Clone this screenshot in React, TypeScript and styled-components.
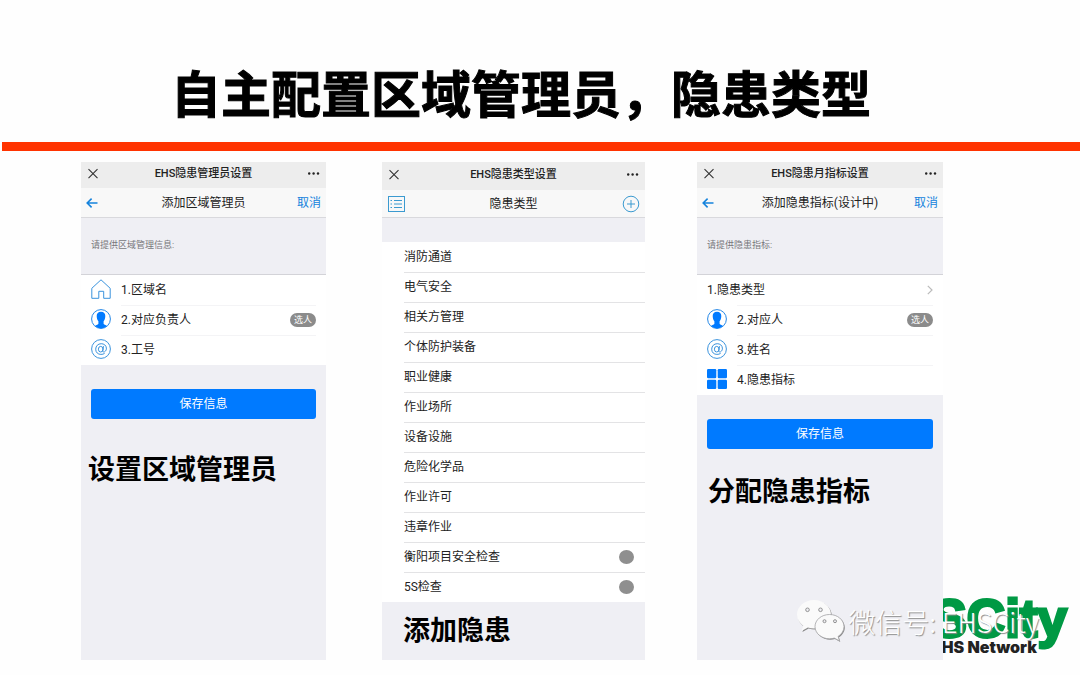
import React, { useId } from "react";
import styled, { createGlobalStyle } from "styled-components";

const GlobalStyle = createGlobalStyle`
  *, *::before, *::after { box-sizing: border-box; }
  body {
    margin: 0;
    background: #fefefe;
    color: #222;
    font-family: Roboto, "Noto Sans CJK SC", sans-serif;
    font-size: 12px;
  }
  button, input { font: inherit; color: inherit; margin: 0; padding: 0; border: 0; background: none; }
  h1, h2, h3, p, ul { margin: 0; padding: 0; font-weight: inherit; font-size: inherit; }
  ul { list-style: none; }
  a { text-decoration: none; }
  svg { display: block; flex: none; }
`;

const Slide = styled.main`
  position: relative;
  min-height: 675px;
  overflow: hidden;
`;

const SlideTitle = styled.h1`
  padding: 56px 38px 0 0;
  line-height: 70px;
  font-family: "Noto Sans CJK SC", sans-serif;
  font-size: 50px;
  font-weight: 700;
  text-align: center;
  color: #000;
  -webkit-text-stroke: 1px #000;
`;

const Rule = styled.div`
  height: 9px;
  margin: 16px 0 11px 2px;
  background: #ff3300;
`;

const Board = styled.div`
  position: relative;
  z-index: 1;
  display: grid;
  grid-template-columns: 81fr 245fr 56fr 263fr 52fr 246fr 137fr;
  min-height: 498px;
`;

const Phone = styled.section<{ $track: number }>`
  grid-column: ${(p) => p.$track};
  min-width: 0;
  background: #efeff4;
`;

const TitleBar = styled.header<{ $tall?: boolean }>`
  display: grid;
  grid-template-columns: 24px 1fr 24px;
  align-items: center;
  height: ${(p) => (p.$tall ? 28 : 26)}px;
  padding: 0 5px 2px;
  background: #ededed;
  line-height: 22px;
  font-size: 11px;
  font-weight: 500;
  text-align: center;
`;

const NavBar = styled.nav<{ $tall?: boolean }>`
  display: grid;
  grid-template-columns: 30px 1fr 30px;
  align-items: center;
  height: ${(p) => (p.$tall ? 28 : 30)}px;
  padding: 0 5px;
  border-bottom: 1px solid #d9d9dd;
  background: #f8f8f8;
  line-height: 24px;
  text-align: center;
`;

const IconButton = styled.button<{ $end?: boolean }>`
  display: flex;
  justify-content: ${(p) => (p.$end ? "flex-end" : "flex-start")};
  cursor: pointer;
`;

const Cancel = styled.a`
  color: #1583dc;
  text-align: right;
`;

const Hint = styled.p`
  height: 56px;
  padding: 0 10px;
  line-height: 54px;
  font-size: 9px;
  color: #77777b;
`;

const Fields = styled.div`
  border-top: 1px solid #d3d3d8;
  background: #fff;
`;

const Field = styled.div`
  display: flex;
  align-items: center;
  gap: 10px;
  height: 30px;
  padding: 0 10px 2px;
`;

const FieldBody = styled.div<{ $line?: boolean }>`
  display: flex;
  flex: 1;
  align-items: center;
  min-width: 0;
  height: 28px;
  border-top: 1px solid ${(p) => (p.$line ? "#f4f4f6" : "transparent")};
  line-height: 26px;
`;

const FieldInput = styled.input`
  flex: 1;
  min-width: 0;
  height: 26px;
  padding-left: 8px;
  outline: 0;
`;

const Pill = styled.button`
  height: 14px;
  padding: 0 4px;
  border-radius: 7px;
  background: #8b8b8b;
  color: #fff;
  line-height: 14px;
  font-size: 9px;
`;

const Save = styled.button`
  display: block;
  width: calc(100% - 20px);
  height: 30px;
  margin: 24px 10px 0;
  border-radius: 3px;
  background: #007aff;
  color: #fff;
  line-height: 28px;
`;

const Caption = styled.h2<{ $top: number; $left: number }>`
  padding: ${(p) => p.$top}px 0 0 ${(p) => p.$left}px;
  font-family: "Noto Sans CJK SC", sans-serif;
  line-height: 40px;
  font-size: 27px;
  font-weight: 700;
  color: #000;
`;

const TypeList = styled.ul`
  margin-top: 24px;
  padding-left: 22px;
  background: #fff;
`;

const TypeItem = styled.li`
  display: flex;
  align-items: center;
  justify-content: space-between;
  height: 30px;
  padding: 0 11px 1px 0;
  line-height: 28px;
  & + & { border-top: 1px solid #e3e3e5; }
`;

const Dot = styled.span`
  width: 15px;
  height: 14px;
  border-radius: 50%;
  background: #8f8f8f;
`;

const Logo = styled.div`
  position: absolute;
  right: 13px;
  top: 590px;
  text-align: right;
`;

const LogoName = styled.div`
  line-height: 58px;
  font-family: "Liberation Sans", sans-serif;
  font-size: 53px;
  font-weight: 700;
  color: #009944;
  -webkit-text-stroke: 3px #009944;
`;

const LogoSub = styled.div`
  margin-top: -10px;
  padding-right: 30px;
  line-height: 18px;
  font-family: Inter, sans-serif;
  font-size: 16px;
  font-weight: 900;
  color: #222;
`;

const Watermark = styled.div`
  position: absolute;
  z-index: 2;
  right: 41px;
  top: 599px;
  display: flex;
  gap: 2px;
  color: #fff;
  font-family: "Noto Sans CJK SC", sans-serif;
  line-height: 46px;
  font-size: 27px;
  font-weight: 300;
  text-shadow: 1px 1px 1px #8c8c8c;
  white-space: pre;
`;

const CloseIcon = () => (
  <svg width="14" height="14" viewBox="0 0 14 14" fill="none" stroke="#333" strokeWidth="1.1">
    <path d="M2.5 2.200l9 9M11.5 2.200l-9 9" />
  </svg>
);

const MoreIcon = () => (
  <svg width="14" height="14" viewBox="0 0 14 14" fill="#222">
    <circle cx="2.2" cy="6.500" r="1.2" />
    <circle cx="6.6" cy="6.500" r="1.2" />
    <circle cx="11" cy="6.500" r="1.2" />
  </svg>
);

const BackIcon = () => (
  <svg width="12" height="12" viewBox="0 0 12 12" fill="none" stroke="#1583dc" strokeWidth="1.6">
    <path d="M11.5 6H1.2M5.6 1.6L1.2 6l4.4 4.4" />
  </svg>
);

const ListIcon = () => (
  <svg width="18" height="16" viewBox="0 0 18 16" fill="none" stroke="#3b9ad0">
    <rect x="1.5" y="0.5" width="16" height="15" />
    <path d="M7 4.5h8M7 8h8M7 11.5h8M3.5 4.500h1.500M3.500 8h1.500M3.500 11.500h1.500" />
  </svg>
);

const AddIcon = () => (
  <svg width="18" height="18" viewBox="0 0 18 18" fill="none" stroke="#3b9ad0">
    <circle cx="9" cy="9" r="7.8" />
    <path d="M9 5v8M5 9h8" />
  </svg>
);

const HomeIcon = () => (
  <svg width="20" height="20" viewBox="0 0 20 20" fill="none" stroke="#3a93dd">
    <path d="M0.8 9.3L10 0.8l9.2 8.5v10h-6.500v-7H7.800v7h-7z" />
  </svg>
);

const PersonIcon = () => (
  <svg width="20" height="20" viewBox="0 0 20 20">
    <circle cx="10" cy="10" r="9.4" fill="#fff" stroke="#2487e6" />
    <path
      fill="#007aff"
      d="M10 2.700c-2.900 0-4.300 1.700-4.300 4.400 0 2.200.6 3.900 1.700 5.200v2.400c0 1-2.200 1.200-3.400 2.200A9.400 9.400 0 0 0 10 19.400a9.400 9.400 0 0 0 6-2.500c-1.200-1-3.400-1.200-3.400-2.200v-2.400c1.100-1.300 1.700-3 1.700-5.200 0-2.700-1.400-4.400-4.300-4.400z"
    />
  </svg>
);

const AtIcon = () => (
  <svg width="20" height="20" viewBox="0 0 20 20" fill="none" stroke="#3a93dd">
    <circle cx="10" cy="10" r="9.4" />
    <ellipse cx="9.700" cy="10.200" rx="2.300" ry="2.800" />
    <path d="M12.500 7.200l-.7 4.300c-.2 1.500.8 1.900 1.800 1.300 1.300-.8 1.900-2.200 1.800-3.700C15.200 6.400 13 4.700 10.200 4.700 7 4.700 4.700 7 4.700 10.200s2.200 5.200 5.200 5.200c1.500 0 2.700-.3 3.700-1" />
  </svg>
);

const GridIcon = () => (
  <svg width="20" height="20" viewBox="0 0 20 20" fill="#007aff">
    <rect width="9.300" height="9.300" rx="1.200" />
    <rect x="10.700" width="9.300" height="9.300" rx="1.200" />
    <rect y="10.700" width="9.300" height="9.300" rx="1.200" />
    <rect x="10.700" y="10.700" width="9.300" height="9.300" rx="1.200" />
  </svg>
);

const ChevronIcon = () => (
  <svg width="6" height="10" viewBox="0 0 6 10" fill="none" stroke="#bbb" strokeWidth="1.200">
    <path d="M0.800 0.800L5 5 0.800 9.200" />
  </svg>
);

const WeChatIcon = () => (
  <svg width="50" height="46" viewBox="0 0 50 46">
    <g fill="#8c8c8c" transform="translate(0.800 1)">
      <path d="M18 1C8.500 1 1 7.500 1 15.600c0 4.500 2.400 8.400 6.200 11.100L5.600 32l6.300-3.400c2 .6 4 .9 6.100.9 9.500 0 17-6.200 17-13.900S27.500 1 18 1z" />
      <path d="M33.500 15.500c-8 0-14.500 5.400-14.500 12.100s6.500 12.200 14.500 12.200c1.700 0 3.300-.3 4.800-.7l5.200 2.800-1.400-4.500c3.600-2.200 5.900-5.800 5.900-9.800 0-6.700-6.500-12.100-14.500-12.100z" />
    </g>
    <path fill="#fafafa" d="M18 1C8.500 1 1 7.500 1 15.600c0 4.500 2.400 8.400 6.200 11.100L5.600 32l6.300-3.400c2 .6 4 .9 6.100.9 9.500 0 17-6.200 17-13.900S27.500 1 18 1z" />
    <path fill="#fafafa" stroke="#a2a2a4" strokeWidth="0.800" d="M33.500 15.500c-8 0-14.500 5.400-14.500 12.100s6.500 12.200 14.500 12.200c1.700 0 3.300-.3 4.800-.7l5.200 2.800-1.400-4.500c3.600-2.200 5.900-5.800 5.900-9.800 0-6.700-6.500-12.100-14.500-12.100z" />
    <g fill="#efeff4" stroke="#888" strokeWidth="0.900">
      <circle cx="11.500" cy="10.800" r="1.800" />
      <circle cx="24.500" cy="10.800" r="1.800" />
      <circle cx="28.500" cy="22.200" r="1.500" />
      <circle cx="39" cy="22.200" r="1.500" />
    </g>
  </svg>
);

function PhoneTitle({ text, tall }: { text: string; tall?: boolean }) {
  return (
    <TitleBar $tall={tall}>
      <IconButton aria-label="关闭"><CloseIcon /></IconButton>
      <h2>{text}</h2>
      <IconButton $end aria-label="更多"><MoreIcon /></IconButton>
    </TitleBar>
  );
}

function FormNav({ text }: { text: string }) {
  return (
    <NavBar>
      <IconButton aria-label="返回"><BackIcon /></IconButton>
      <h3>{text}</h3>
      <Cancel href="#">取消</Cancel>
    </NavBar>
  );
}

interface FieldRowProps {
  icon?: React.ReactNode;
  label: string;
  line?: boolean;
  action?: React.ReactNode;
}

function FieldRow({ icon, label, line, action }: FieldRowProps) {
  const id = useId();
  return (
    <Field>
      {icon}
      <FieldBody $line={line}>
        <label htmlFor={id}>{label}</label>
        <FieldInput id={id} type="text" />
        {action}
      </FieldBody>
    </Field>
  );
}

const hazardTypes = [
  { name: "消防通道" },
  { name: "电气安全" },
  { name: "相关方管理" },
  { name: "个体防护装备" },
  { name: "职业健康" },
  { name: "作业场所" },
  { name: "设备设施" },
  { name: "危险化学品" },
  { name: "作业许可" },
  { name: "违章作业" },
  { name: "衡阳项目安全检查", custom: true },
  { name: "5S检查", custom: true },
];

export default function App() {
  return (
    <Slide>
      <GlobalStyle />
      <SlideTitle>自主配置区域管理员，隐患类型</SlideTitle>
      <Rule />
      <Board>
        <Phone $track={2}>
          <PhoneTitle text="EHS隐患管理员设置" />
          <FormNav text="添加区域管理员" />
          <Hint>请提供区域管理信息:</Hint>
          <Fields>
            <FieldRow icon={<HomeIcon />} label="1.区域名" />
            <FieldRow icon={<PersonIcon />} label="2.对应负责人" line action={<Pill>选人</Pill>} />
            <FieldRow icon={<AtIcon />} label="3.工号" line />
          </Fields>
          <Save>保存信息</Save>
          <Caption $top={29} $left={7}>设置区域管理员</Caption>
        </Phone>

        <Phone $track={4}>
          <PhoneTitle text="EHS隐患类型设置" tall />
          <NavBar $tall>
            <IconButton aria-label="列表"><ListIcon /></IconButton>
            <h3>隐患类型</h3>
            <IconButton $end aria-label="添加"><AddIcon /></IconButton>
          </NavBar>
          <TypeList>
            {hazardTypes.map((t) => (
              <TypeItem key={t.name}>
                {t.name}
                {t.custom && <Dot />}
              </TypeItem>
            ))}
          </TypeList>
          <Caption $top={7} $left={21}>添加隐患</Caption>
        </Phone>

        <Phone $track={6}>
          <PhoneTitle text="EHS隐患月指标设置" />
          <FormNav text="添加隐患指标(设计中)" />
          <Hint>请提供隐患指标:</Hint>
          <Fields>
            <FieldRow label="1.隐患类型" action={<IconButton aria-label="选择隐患类型"><ChevronIcon /></IconButton>} />
            <FieldRow icon={<PersonIcon />} label="2.对应人" line action={<Pill>选人</Pill>} />
            <FieldRow icon={<AtIcon />} label="3.姓名" line />
            <FieldRow icon={<GridIcon />} label="4.隐患指标" line />
          </Fields>
          <Save>保存信息</Save>
          <Caption $top={21} $left={11}>分配隐患指标</Caption>
        </Phone>
      </Board>

      <Logo>
        <LogoName>EHSCity</LogoName>
        <LogoSub>EHS Network</LogoSub>
      </Logo>
      <Watermark>
        <WeChatIcon />
        <span>微信号: EHSCity</span>
      </Watermark>
    </Slide>
  );
}
